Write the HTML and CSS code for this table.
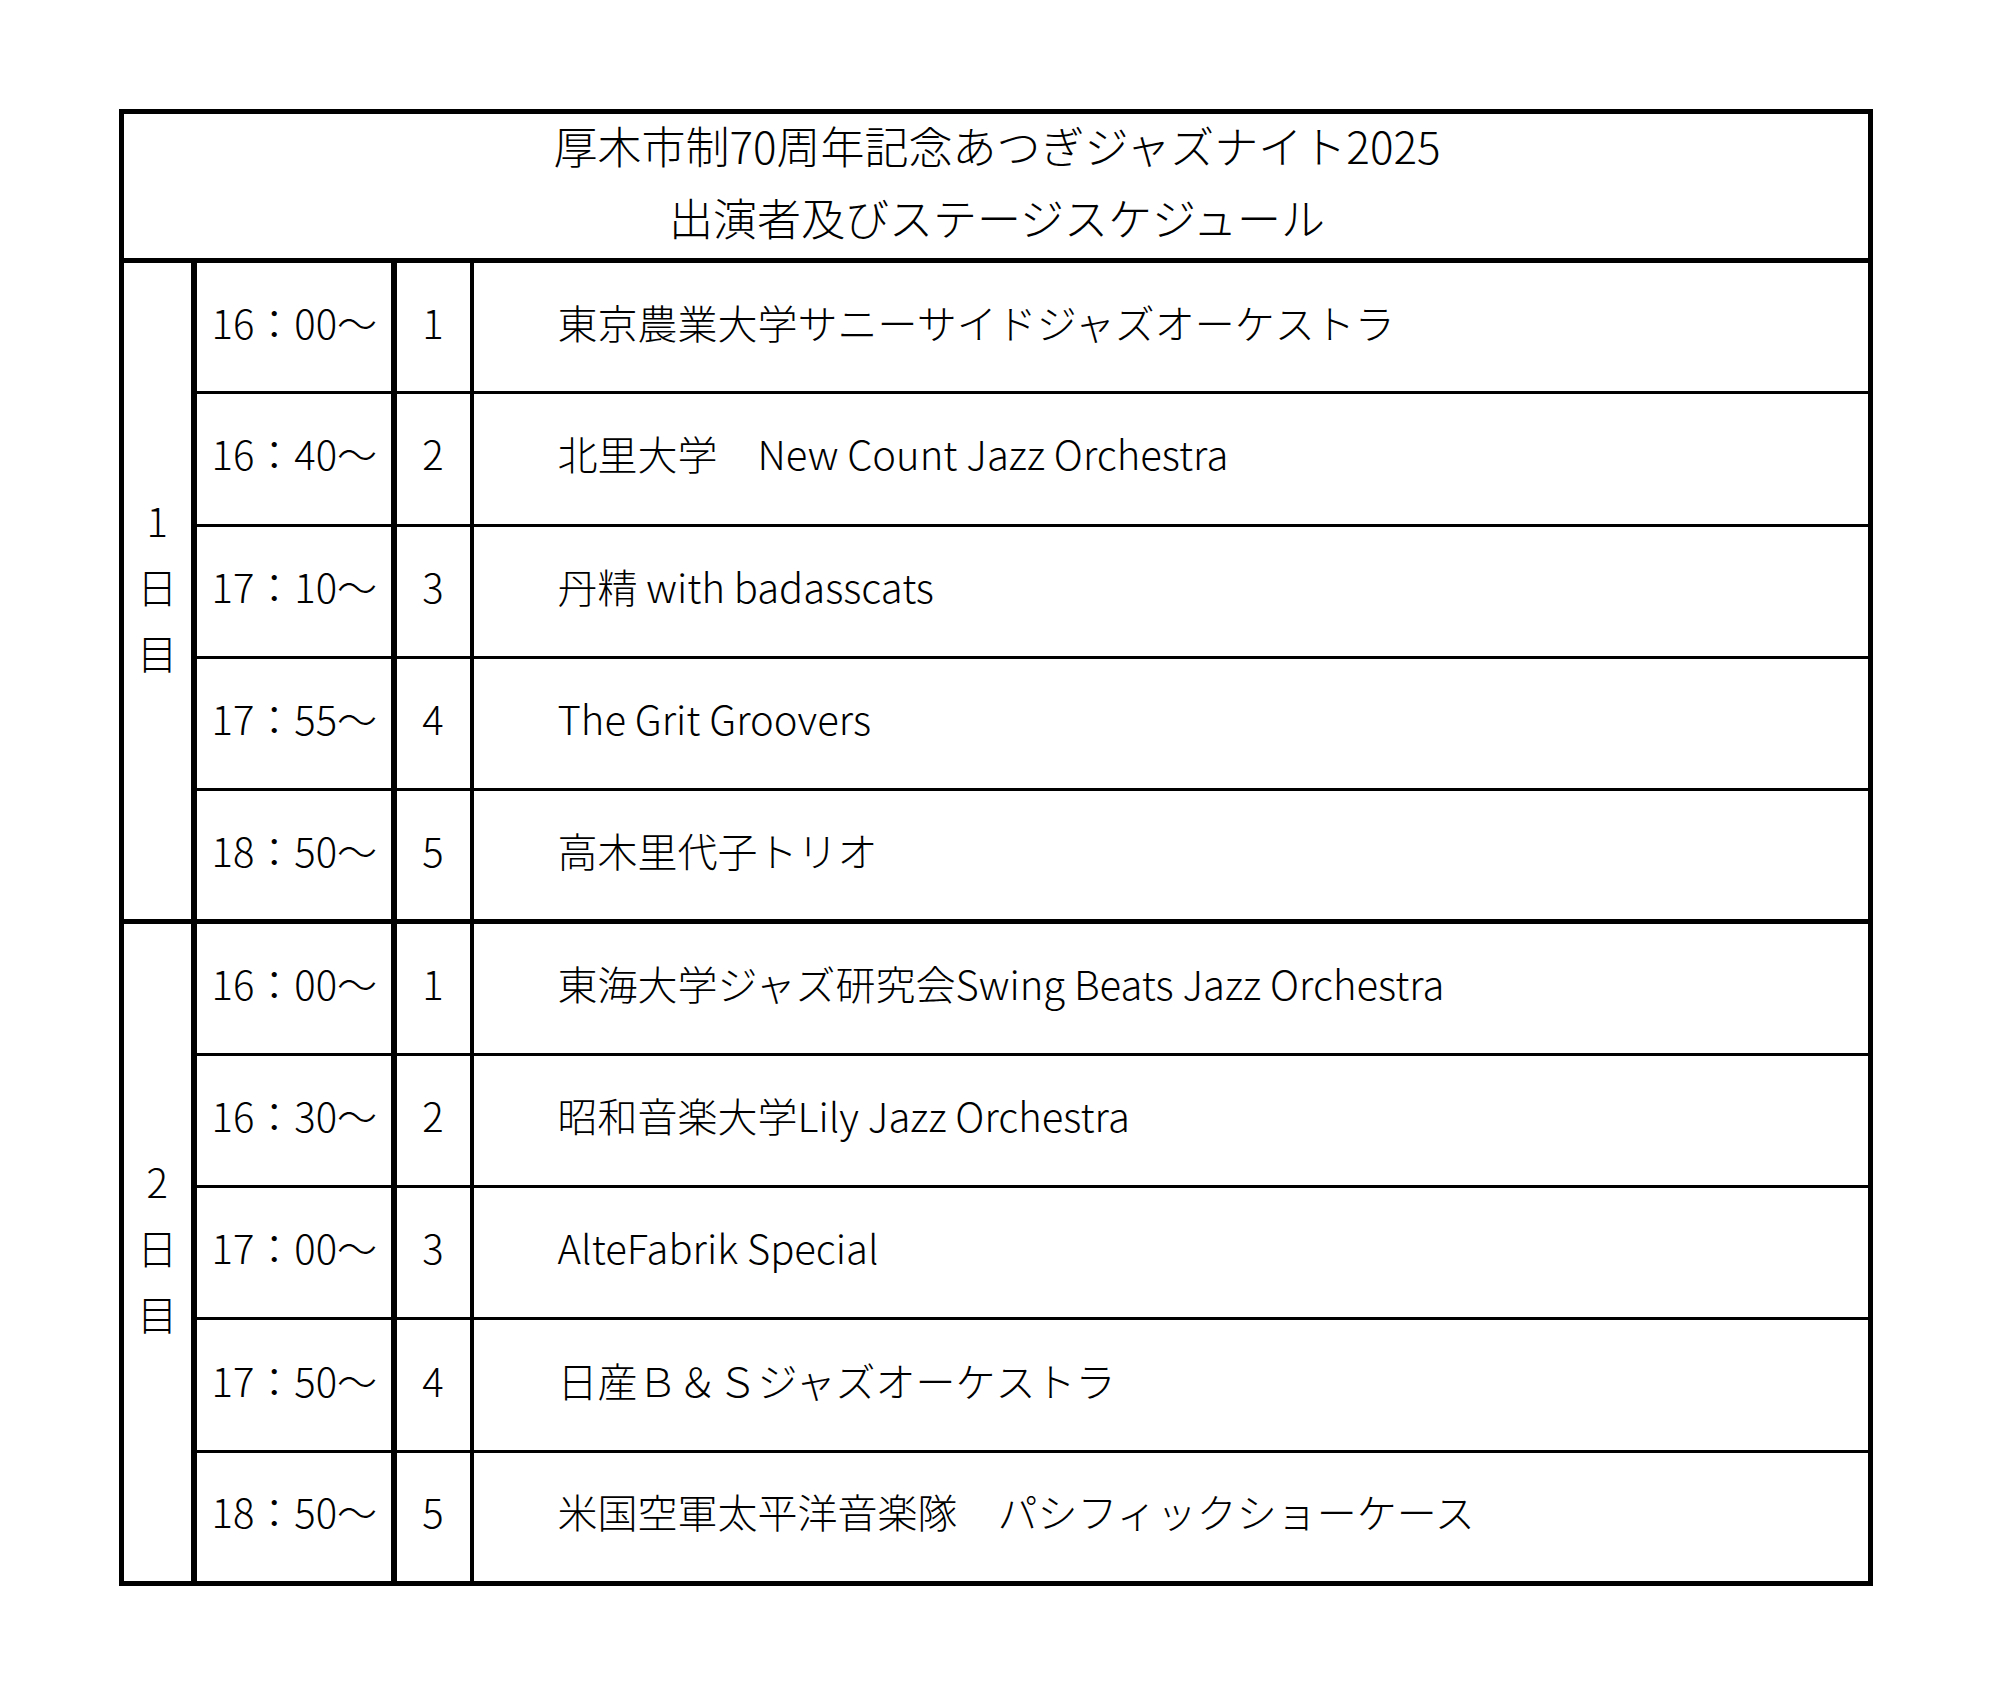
FILE: index.html
```html
<!DOCTYPE html>
<html lang="ja">
<head>
<meta charset="utf-8">
<title>厚木市制70周年記念あつぎジャズナイト2025 出演者及びステージスケジュール</title>
<link rel="stylesheet" href="styles.css">
</head>
<body>
<div class="page">
<table class="schedule">
  <colgroup>
    <col class="c-day">
    <col class="c-time">
    <col class="c-num">
    <col class="c-name">
  </colgroup>
  <thead>
    <tr class="head-row">
      <th colspan="4" class="title"><div class="title-text">厚木市制70周年記念あつぎジャズナイト2025<br>出演者及びステージスケジュール</div></th>
    </tr>
  </thead>
  <tbody class="day">
    <tr>
      <td rowspan="5" class="daycell">1<br>日<br>目</td>
      <td class="time">16：00～</td><td class="num">1</td><td class="name">東京農業大学サニーサイドジャズオーケストラ</td>
    </tr>
    <tr><td class="time">16：40～</td><td class="num">2</td><td class="name">北里大学　New Count Jazz Orchestra</td></tr>
    <tr><td class="time">17：10～</td><td class="num">3</td><td class="name">丹精 with badasscats</td></tr>
    <tr><td class="time">17：55～</td><td class="num">4</td><td class="name">The Grit Groovers</td></tr>
    <tr><td class="time">18：50～</td><td class="num">5</td><td class="name">高木里代子トリオ</td></tr>
  </tbody>
  <tbody class="day">
    <tr>
      <td rowspan="5" class="daycell">2<br>日<br>目</td>
      <td class="time">16：00～</td><td class="num">1</td><td class="name">東海大学ジャズ研究会Swing Beats Jazz Orchestra</td>
    </tr>
    <tr><td class="time">16：30～</td><td class="num">2</td><td class="name">昭和音楽大学Lily Jazz Orchestra</td></tr>
    <tr><td class="time">17：00～</td><td class="num">3</td><td class="name">AlteFabrik Special</td></tr>
    <tr><td class="time">17：50～</td><td class="num">4</td><td class="name">日産Ｂ＆Ｓジャズオーケストラ</td></tr>
    <tr><td class="time">18：50～</td><td class="num">5</td><td class="name">米国空軍太平洋音楽隊　パシフィックショーケース</td></tr>
  </tbody>
</table>
</div>
</body>
</html>
```
FILE: styles.css
```css
html, body {
  margin: 0;
  padding: 0;
  background: #ffffff;
}

body {
  font-family: "Noto Sans CJK JP", "Noto Sans", sans-serif;
  font-weight: 300;
  color: #000000;
}

.page {
  padding: 109px 0 0 119px;
}

.schedule {
  border-collapse: collapse;
  table-layout: fixed;
  width: 1754px;
  border: 5px solid #000;
  font-size: 40px;
}

.c-day { width: 72px; }
.c-time { width: 200px; }
.c-num { width: 78px; }

.schedule td,
.schedule th {
  padding: 0 0 11px 0;
  vertical-align: middle;
  font-weight: 300;
  border: 3px solid #000;
}

.head-row {
  height: 149px;
}

.schedule .title {
  text-align: center;
  font-size: 44px;
  padding: 0 0 0 2px;
  border-bottom: 5px solid #000;
}

.title-text {
  line-height: 72px;
  margin-top: -10px;
}

.schedule tbody tr {
  height: 132.3px;
}

.schedule tbody.day + tbody.day tr:first-child td {
  border-top: 5px solid #000;
}

.schedule .daycell {
  text-align: center;
  line-height: 66px;
  border-right: 6px solid #000;
  border-left: 5px solid #000;
}

.schedule .time {
  padding-left: 15px;
  white-space: nowrap;
  border-right: 6px solid #000;
}

.schedule .num {
  text-align: center;
  border-right: 4px solid #000;
}

.schedule .name {
  padding-left: 84px;
  white-space: nowrap;
}
```
